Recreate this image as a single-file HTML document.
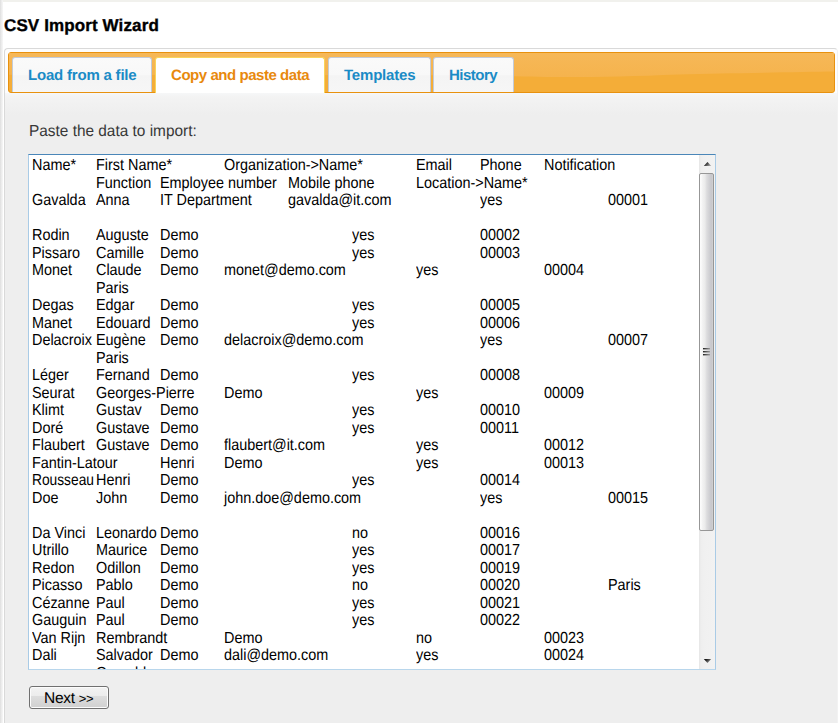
<!DOCTYPE html>
<html><head><meta charset="utf-8">
<style>
html,body{margin:0;padding:0;}
body{width:838px;height:723px;overflow:hidden;position:relative;background:#fff;font-family:"Liberation Sans",sans-serif;text-rendering:geometricPrecision;}
.abs{position:absolute;}
#lstrip{left:0;top:0;width:3px;height:723px;background:linear-gradient(to right,#dedede,#ebebeb 45%,#f7f7f7);}
#tstrip{left:3px;top:0;width:835px;height:2px;background:#f1f1ed;}
#title{left:4px;top:15px;font-weight:bold;font-size:17px;line-height:22px;color:#000;white-space:nowrap;-webkit-text-stroke:0.35px #000;letter-spacing:0.12px;}
#panel{left:4px;top:48px;width:834px;height:700px;box-sizing:border-box;border:1px solid #d9d9d9;border-right-color:#f2f2f2;border-radius:4px;background:linear-gradient(to bottom,#fdfdfd 0,#fdfdfd 44px,#f6f7f8 44px,#f3f3f3 48px,#eeeeee 66px,#eeeeee 100%);}
.tab{position:absolute;top:57px;height:35px;box-sizing:border-box;border:1px solid #c3cbd8;border-bottom:none;border-radius:3px 3px 0 0;background:linear-gradient(to bottom,#fafafa 0,#f8f8f8 50%,#f4f4f4 52%,#f6f6f6 100%);font-weight:bold;font-size:15px;color:#1a8bc6;white-space:nowrap;}
.tab span{position:absolute;top:8.8px;line-height:17px;}
.tab.active{height:36px;border-color:#f8d45c;background:#fff;color:#e8890d;}
#label{left:28.5px;top:123px;font-size:16px;line-height:17px;color:#383838;white-space:nowrap;transform:scaleX(0.962);transform-origin:0 0;}
#ta{left:28px;top:154px;width:688px;height:516px;box-sizing:border-box;border:1px solid #a9cbe6;border-top-color:#4a86b8;border-bottom-color:#b8d6ec;background:#fff;overflow:hidden;}
#ta span{position:absolute;font-size:16px;line-height:17.5px;transform:scaleX(0.9);transform-origin:0 0;white-space:pre;color:#000;}
#sb{position:absolute;left:670px;top:0;width:16px;height:514px;background:linear-gradient(to right,#e6e6e6 0,#eeeeee 2px,#f0f0f0 5px,#f2f2f2 100%);}
#thumb{position:absolute;left:0;top:18px;width:15px;height:358px;box-sizing:border-box;border:1px solid #979797;border-radius:2px;background:linear-gradient(to right,#fbfbfb 0,#fbfbfb 8%,#f3f3f3 18%,#ebebeb 38%,#dcdcde 52%,#cbcbcf 80%,#c8c8cc 88%,#d2d2d2 100%);}
#btn{left:29px;top:686px;width:80px;height:23px;box-sizing:border-box;border:1px solid #707070;border-radius:3px;background:linear-gradient(to bottom,#f3f3f3 0,#ececec 43%,#dddddd 45%,#d0d0d0 100%);box-shadow:inset 0 0 0 1px #fcfcfc;font-size:15.5px;line-height:17px;color:#000;}
#btn span{position:absolute;left:14px;top:3px;white-space:nowrap;letter-spacing:-0.3px;}
#btn span b{font-weight:normal;font-size:13px;letter-spacing:-0.3px;}
</style></head><body>
<div id="lstrip" class="abs"></div>
<div id="tstrip" class="abs"></div>
<div id="title" class="abs">CSV Import Wizard</div>
<div id="panel" class="abs"></div>
<svg id="bar" class="abs" width="827" height="41" style="left:8px;top:52px">
<defs><linearGradient id="bg1" x1="0" y1="0" x2="0" y2="1"><stop offset="0" stop-color="#f6b858"/><stop offset="1" stop-color="#f5b34d"/></linearGradient></defs>
<rect x="0.5" y="0.5" width="826" height="40" rx="2.5" ry="2.5" fill="#f4ad38" stroke="#e8910e"/>
<path d="M1 1 H826 V19.6 C790 20.2 720 21.2 670 22.4 C630 24.2 590 24.9 560 25.1 C530 25.2 500 24 430 23.2 L1 22.8 Z" fill="url(#bg1)"/>
</svg>
<div class="tab" style="left:12px;width:140px"><span style="left:15px;letter-spacing:-0.2px">Load from a file</span></div>
<div class="tab active" style="left:155px;width:170px"><span style="left:15px;letter-spacing:-0.45px">Copy and paste data</span></div>
<div class="tab" style="left:328px;width:103px"><span style="left:15px;letter-spacing:-0.2px">Templates</span></div>
<div class="tab" style="left:433px;width:81px"><span style="left:15px;letter-spacing:-0.5px">History</span></div>
<div id="label" class="abs">Paste the data to import:</div>
<div id="ta" class="abs">
<span style="left:2.5px;top:2.00px">Name*</span>
<span style="left:66.5px;top:2.00px">First Name*</span>
<span style="left:194.5px;top:2.00px">Organization-&gt;Name*</span>
<span style="left:386.5px;top:2.00px">Email</span>
<span style="left:450.5px;top:2.00px">Phone</span>
<span style="left:514.5px;top:2.00px">Notification</span>
<span style="left:66.5px;top:19.50px">Function</span>
<span style="left:130.5px;top:19.50px">Employee number</span>
<span style="left:258.5px;top:19.50px">Mobile phone</span>
<span style="left:386.5px;top:19.50px">Location-&gt;Name*</span>
<span style="left:2.5px;top:37.00px">Gavalda</span>
<span style="left:66.5px;top:37.00px">Anna</span>
<span style="left:130.5px;top:37.00px">IT Department</span>
<span style="left:258.5px;top:37.00px">gavalda@it.com</span>
<span style="left:450.5px;top:37.00px">yes</span>
<span style="left:578.5px;top:37.00px">00001</span>
<span style="left:2.5px;top:72.00px">Rodin</span>
<span style="left:66.5px;top:72.00px">Auguste</span>
<span style="left:130.5px;top:72.00px">Demo</span>
<span style="left:322.5px;top:72.00px">yes</span>
<span style="left:450.5px;top:72.00px">00002</span>
<span style="left:2.5px;top:89.50px">Pissaro</span>
<span style="left:66.5px;top:89.50px">Camille</span>
<span style="left:130.5px;top:89.50px">Demo</span>
<span style="left:322.5px;top:89.50px">yes</span>
<span style="left:450.5px;top:89.50px">00003</span>
<span style="left:2.5px;top:107.00px">Monet</span>
<span style="left:66.5px;top:107.00px">Claude</span>
<span style="left:130.5px;top:107.00px">Demo</span>
<span style="left:194.5px;top:107.00px">monet@demo.com</span>
<span style="left:386.5px;top:107.00px">yes</span>
<span style="left:514.5px;top:107.00px">00004</span>
<span style="left:66.5px;top:124.50px">Paris</span>
<span style="left:2.5px;top:142.00px">Degas</span>
<span style="left:66.5px;top:142.00px">Edgar</span>
<span style="left:130.5px;top:142.00px">Demo</span>
<span style="left:322.5px;top:142.00px">yes</span>
<span style="left:450.5px;top:142.00px">00005</span>
<span style="left:2.5px;top:159.50px">Manet</span>
<span style="left:66.5px;top:159.50px">Edouard</span>
<span style="left:130.5px;top:159.50px">Demo</span>
<span style="left:322.5px;top:159.50px">yes</span>
<span style="left:450.5px;top:159.50px">00006</span>
<span style="left:2.5px;top:177.00px">Delacroix</span>
<span style="left:66.5px;top:177.00px">Eugène</span>
<span style="left:130.5px;top:177.00px">Demo</span>
<span style="left:194.5px;top:177.00px">delacroix@demo.com</span>
<span style="left:450.5px;top:177.00px">yes</span>
<span style="left:578.5px;top:177.00px">00007</span>
<span style="left:66.5px;top:194.50px">Paris</span>
<span style="left:2.5px;top:212.00px">Léger</span>
<span style="left:66.5px;top:212.00px">Fernand</span>
<span style="left:130.5px;top:212.00px">Demo</span>
<span style="left:322.5px;top:212.00px">yes</span>
<span style="left:450.5px;top:212.00px">00008</span>
<span style="left:2.5px;top:229.50px">Seurat</span>
<span style="left:66.5px;top:229.50px">Georges-Pierre</span>
<span style="left:194.5px;top:229.50px">Demo</span>
<span style="left:386.5px;top:229.50px">yes</span>
<span style="left:514.5px;top:229.50px">00009</span>
<span style="left:2.5px;top:247.00px">Klimt</span>
<span style="left:66.5px;top:247.00px">Gustav</span>
<span style="left:130.5px;top:247.00px">Demo</span>
<span style="left:322.5px;top:247.00px">yes</span>
<span style="left:450.5px;top:247.00px">00010</span>
<span style="left:2.5px;top:264.50px">Doré</span>
<span style="left:66.5px;top:264.50px">Gustave</span>
<span style="left:130.5px;top:264.50px">Demo</span>
<span style="left:322.5px;top:264.50px">yes</span>
<span style="left:450.5px;top:264.50px">00011</span>
<span style="left:2.5px;top:282.00px">Flaubert</span>
<span style="left:66.5px;top:282.00px">Gustave</span>
<span style="left:130.5px;top:282.00px">Demo</span>
<span style="left:194.5px;top:282.00px">flaubert@it.com</span>
<span style="left:386.5px;top:282.00px">yes</span>
<span style="left:514.5px;top:282.00px">00012</span>
<span style="left:2.5px;top:299.50px">Fantin-Latour</span>
<span style="left:130.5px;top:299.50px">Henri</span>
<span style="left:194.5px;top:299.50px">Demo</span>
<span style="left:386.5px;top:299.50px">yes</span>
<span style="left:514.5px;top:299.50px">00013</span>
<span style="left:2.5px;top:317.00px;transform:scaleX(0.86)">Rousseau</span>
<span style="left:66.5px;top:317.00px">Henri</span>
<span style="left:130.5px;top:317.00px">Demo</span>
<span style="left:322.5px;top:317.00px">yes</span>
<span style="left:450.5px;top:317.00px">00014</span>
<span style="left:2.5px;top:334.50px">Doe</span>
<span style="left:66.5px;top:334.50px">John</span>
<span style="left:130.5px;top:334.50px">Demo</span>
<span style="left:194.5px;top:334.50px">john.doe@demo.com</span>
<span style="left:450.5px;top:334.50px">yes</span>
<span style="left:578.5px;top:334.50px">00015</span>
<span style="left:2.5px;top:369.50px">Da Vinci</span>
<span style="left:66.5px;top:369.50px">Leonardo</span>
<span style="left:130.5px;top:369.50px">Demo</span>
<span style="left:322.5px;top:369.50px">no</span>
<span style="left:450.5px;top:369.50px">00016</span>
<span style="left:2.5px;top:387.00px">Utrillo</span>
<span style="left:66.5px;top:387.00px">Maurice</span>
<span style="left:130.5px;top:387.00px">Demo</span>
<span style="left:322.5px;top:387.00px">yes</span>
<span style="left:450.5px;top:387.00px">00017</span>
<span style="left:2.5px;top:404.50px">Redon</span>
<span style="left:66.5px;top:404.50px">Odillon</span>
<span style="left:130.5px;top:404.50px">Demo</span>
<span style="left:322.5px;top:404.50px">yes</span>
<span style="left:450.5px;top:404.50px">00019</span>
<span style="left:2.5px;top:422.00px">Picasso</span>
<span style="left:66.5px;top:422.00px">Pablo</span>
<span style="left:130.5px;top:422.00px">Demo</span>
<span style="left:322.5px;top:422.00px">no</span>
<span style="left:450.5px;top:422.00px">00020</span>
<span style="left:578.5px;top:422.00px">Paris</span>
<span style="left:2.5px;top:439.50px">Cézanne</span>
<span style="left:66.5px;top:439.50px">Paul</span>
<span style="left:130.5px;top:439.50px">Demo</span>
<span style="left:322.5px;top:439.50px">yes</span>
<span style="left:450.5px;top:439.50px">00021</span>
<span style="left:2.5px;top:457.00px">Gauguin</span>
<span style="left:66.5px;top:457.00px">Paul</span>
<span style="left:130.5px;top:457.00px">Demo</span>
<span style="left:322.5px;top:457.00px">yes</span>
<span style="left:450.5px;top:457.00px">00022</span>
<span style="left:2.5px;top:474.50px">Van Rijn</span>
<span style="left:66.5px;top:474.50px">Rembrandt</span>
<span style="left:194.5px;top:474.50px">Demo</span>
<span style="left:386.5px;top:474.50px">no</span>
<span style="left:514.5px;top:474.50px">00023</span>
<span style="left:2.5px;top:492.00px">Dali</span>
<span style="left:66.5px;top:492.00px">Salvador</span>
<span style="left:130.5px;top:492.00px">Demo</span>
<span style="left:194.5px;top:492.00px">dali@demo.com</span>
<span style="left:386.5px;top:492.00px">yes</span>
<span style="left:514.5px;top:492.00px">00024</span>
<span style="left:66.5px;top:509.50px">C</span>
<span style="left:105.6px;top:509.50px">l</span>
<span style="left:113.9px;top:509.50px">l</span>
<div id="sb">
<svg width="16" height="514" style="position:absolute;left:0;top:0">
<defs>
<linearGradient id="ag" x1="0" y1="0" x2="1" y2="0.6"><stop offset="0" stop-color="#000"/><stop offset="0.35" stop-color="#222"/><stop offset="1" stop-color="#a0a0a0"/></linearGradient>
<linearGradient id="gg" x1="0" y1="0" x2="1" y2="0"><stop offset="0" stop-color="#222"/><stop offset="1" stop-color="#9a9a9a"/></linearGradient>
</defs>
<path d="M4.8 11 L8.5 7 L12.2 11 Z" fill="url(#ag)"/>
<path d="M4.8 504 L8.5 508 L12.2 504 Z" fill="url(#ag)"/>
</svg>
<div id="thumb">
<svg width="13" height="356" style="position:absolute;left:0;top:0">
<rect x="3" y="174" width="7" height="1.4" fill="url(#gg)"/>
<rect x="3" y="177" width="7" height="1.4" fill="url(#gg)"/>
<rect x="3" y="180" width="7" height="1.4" fill="url(#gg)"/>
</svg>
</div>
</div>
</div>
<div id="btn" class="abs"><span>Next <b>&gt;&gt;</b></span></div>
</body></html>
